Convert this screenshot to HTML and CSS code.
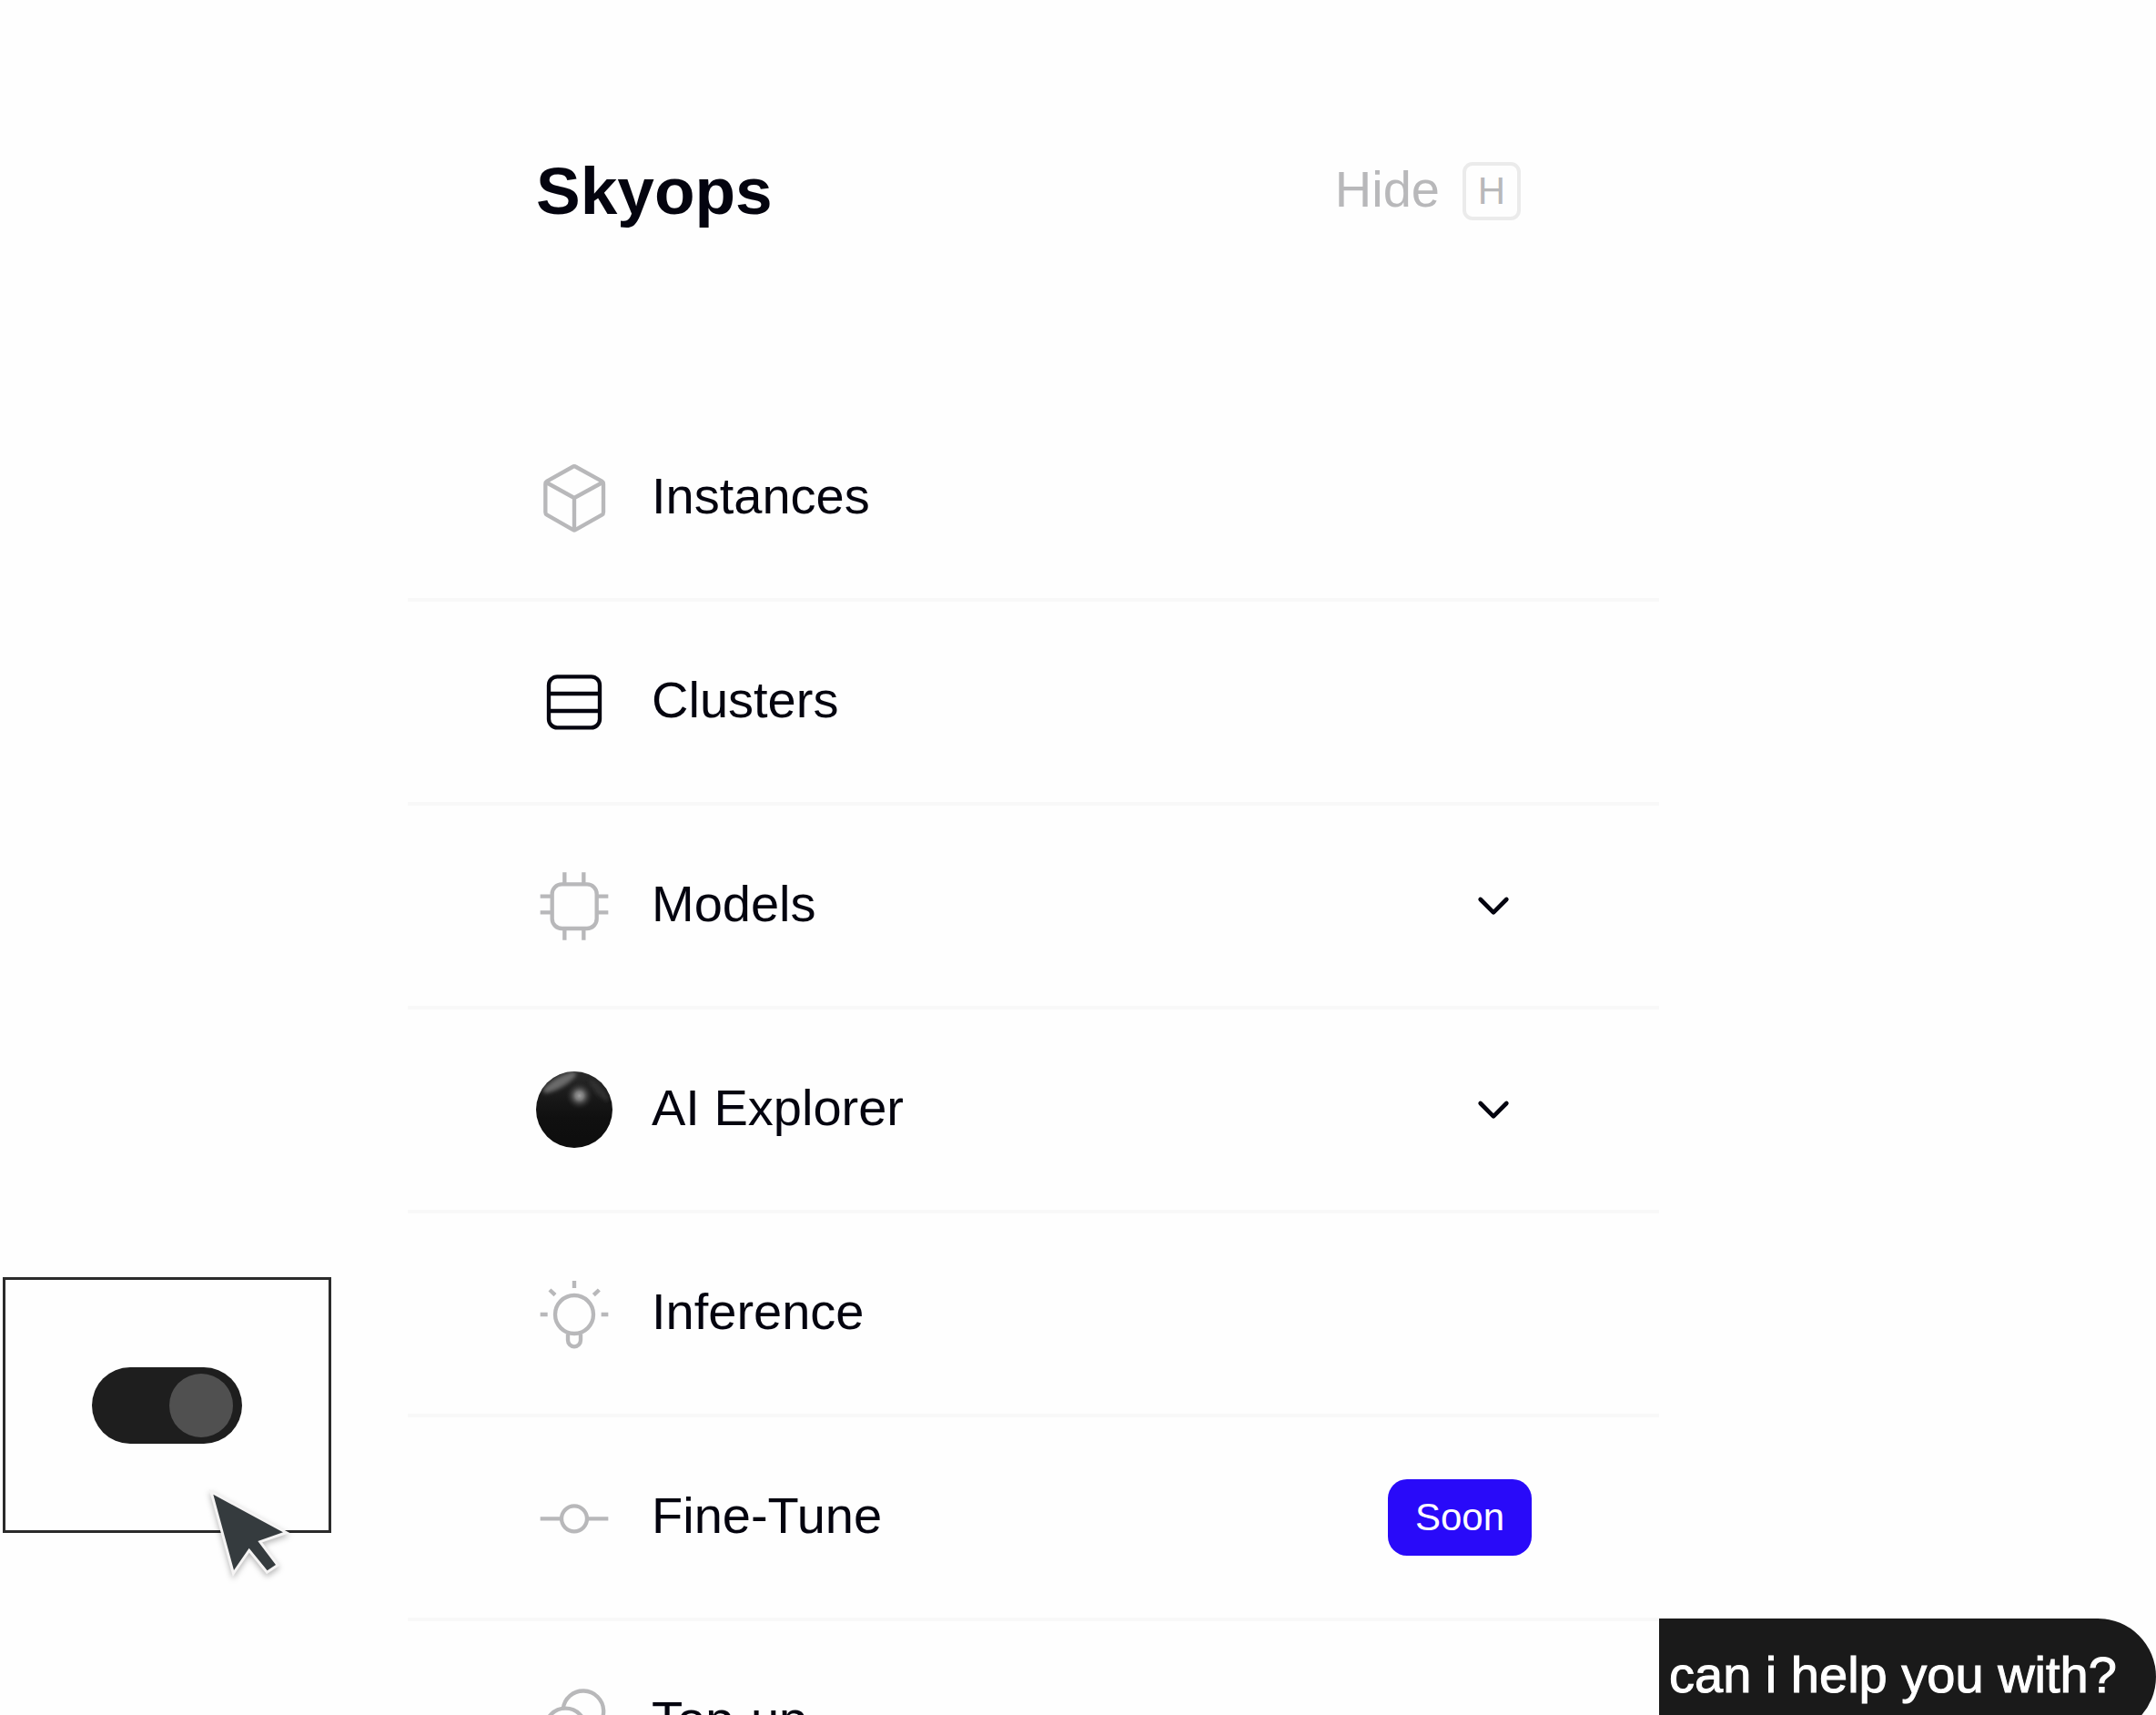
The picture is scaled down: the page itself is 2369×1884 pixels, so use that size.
FILE: index.html
```html
<!DOCTYPE html>
<html lang="en">
<head>
<meta charset="utf-8">
<title>Skyops</title>
<link rel="stylesheet" href="styles.css">
</head>
<body>
<div class="stage">
  <aside class="side side-left">
    <div class="switch-card">
      <input class="switch" type="checkbox" role="switch" aria-label="Show sidebar" checked>
      <svg class="cursor" viewBox="0 0 330 330" aria-hidden="true">
        <path d="M43 35 273 160 190 189 249 267 221 286 161 212 111 285Z"/>
      </svg>
    </div>
  </aside>

  <main class="panel">
    <header class="panel-head">
      <h1 class="brand">Skyops</h1>
      <button class="hide" type="button"><span class="hide-label">Hide</span><kbd class="key">H</kbd></button>
    </header>
    <nav>
      <ul class="menu">
        <li class="item">
          <a class="row" href="#instances">
            <svg class="icon" viewBox="0 0 252 252" aria-hidden="true">
              <path d="M120 24Q126 19 132 24L217 71Q222 74 222 80V173Q222 179 217 182L132 230Q126 235 120 230L36 182Q31 179 31 173V80Q31 74 36 71ZM34 75 126 126 219 75M126 126V232"/>
            </svg>
            <span class="label">Instances</span>
          </a>
        </li>
        <li class="item">
          <a class="row" href="#clusters">
            <svg class="icon icon-active" viewBox="0 0 252 252" aria-hidden="true">
              <rect x="42" y="43" width="168" height="168" rx="28"/>
              <path d="M42 99H210M42 156H210"/>
            </svg>
            <span class="label">Clusters</span>
          </a>
        </li>
        <li class="item">
          <button class="row" type="button" aria-expanded="false">
            <svg class="icon" viewBox="0 0 252 252" aria-hidden="true">
              <rect x="53" y="55" width="147" height="146" rx="32"/>
              <path d="M94 16V55M157 16V55M94 201V239M157 201V239M14 95H53M14 148H53M200 95H238M200 148H238"/>
            </svg>
            <span class="label">Models</span>
            <svg class="icon chevron" viewBox="0 0 252 252" aria-hidden="true"><path d="M83 105 126 148 169 105"/></svg>
          </button>
        </li>
        <li class="item">
          <button class="row" type="button" aria-expanded="false">
            <svg class="orb" viewBox="0 0 252 252" aria-hidden="true">
              <defs>
                <linearGradient id="orb-base" x1="0" y1="0" x2="0" y2="1">
                  <stop offset="0" stop-color="#2a2a2a"/>
                  <stop offset=".35" stop-color="#181818"/>
                  <stop offset=".6" stop-color="#101010"/>
                  <stop offset="1" stop-color="#0d0d0d"/>
                </linearGradient>
                <radialGradient id="orb-shine">
                  <stop offset="0" stop-color="#a0a0a0"/>
                  <stop offset=".3" stop-color="#8a8a8a" stop-opacity=".85"/>
                  <stop offset=".65" stop-color="#555" stop-opacity=".4"/>
                  <stop offset="1" stop-color="#222" stop-opacity="0"/>
                </radialGradient>
                <filter id="orb-soft" x="-50%" y="-100%" width="200%" height="300%"><feGaussianBlur stdDeviation="6"/></filter>
                <clipPath id="orb-clip"><circle cx="126" cy="126" r="126"/></clipPath>
              </defs>
              <g clip-path="url(#orb-clip)">
                <rect width="252" height="252" fill="url(#orb-base)"/>
                <ellipse cx="78" cy="36" rx="62" ry="17" fill="#6a6a6a" transform="rotate(-30 78 36)" filter="url(#orb-soft)"/>
                <ellipse cx="208" cy="62" rx="46" ry="12" fill="#303030" transform="rotate(48 208 62)" filter="url(#orb-soft)"/>
                <circle cx="143" cy="80" r="46" fill="url(#orb-shine)"/>
              </g>
            </svg>
            <span class="label">AI Explorer</span>
            <svg class="icon chevron" viewBox="0 0 252 252" aria-hidden="true"><path d="M83 105 126 148 169 105"/></svg>
          </button>
        </li>
        <li class="item">
          <a class="row" href="#inference">
            <svg class="icon" viewBox="0 0 252 252" aria-hidden="true">
              <circle cx="126" cy="129" r="63"/>
              <path d="M126 18V42M14 129H38M215 129H238M45 48 63 65M208 48 190 65M105 194V214A21 21 0 0 0 147 214V194"/>
            </svg>
            <span class="label">Inference</span>
          </a>
        </li>
        <li class="item">
          <a class="row" href="#fine-tune">
            <svg class="icon" viewBox="0 0 252 252" aria-hidden="true">
              <circle cx="126" cy="130" r="42"/>
              <path d="M14 130H84M168 130H238"/>
            </svg>
            <span class="label">Fine-Tune</span>
            <span class="badge">Soon</span>
          </a>
        </li>
        <li class="item">
          <a class="row" href="#top-up">
            <svg class="icon" viewBox="0 0 252 252" aria-hidden="true">
              <circle cx="97" cy="150" r="67"/>
              <path d="M89 85A67 67 0 1 1 164 159"/>
            </svg>
            <span class="label">Top-up</span>
          </a>
        </li>
      </ul>
    </nav>
  </main>

  <aside class="side">
    <p class="bubble">can i help you with?</p>
  </aside>
</div>
</body>
</html>
```
FILE: styles.css
```css
* {
  box-sizing: border-box;
}

body {
  margin: 0;
  background: #fefefe;
  color: #04040f;
  font-family: "Liberation Sans", Arial, sans-serif;
  font-size: 56px;
  line-height: 64px;
}

.stage {
  display: grid;
  grid-template-columns: 448px minmax(0, 1fr) 546px;
  grid-template-rows: minmax(0, 1fr);
  height: 100vh;
  overflow: hidden;
}

.side {
  display: flex;
  flex-direction: column;
  justify-content: flex-end;
}

/* Switch preview */
.side-left {
  padding: 0 84px 200px 3px;
}

.switch-card {
  position: relative;
  display: flex;
  align-items: center;
  justify-content: center;
  height: 281px;
  border: 3px solid #2b2b2b;
}

.switch {
  appearance: none;
  display: flex;
  align-items: center;
  justify-content: flex-end;
  width: 165px;
  height: 84px;
  margin: 0;
  padding: 0 10px;
  border-radius: 42px;
  background: #1e1e1e;
}

.switch::before {
  content: "";
  width: 70px;
  height: 70px;
  border-radius: 50%;
  background: #505050;
}

.switch:not(:checked) {
  justify-content: flex-start;
}

.cursor {
  position: absolute;
  top: 224px;
  left: 214px;
  width: 110px;
  height: 110px;
  overflow: visible;
  fill: #353b3e;
  stroke: #f5f4f4;
  stroke-width: 18;
  paint-order: stroke;
  filter: drop-shadow(0 3px 3px rgba(0, 0, 0, 0.28));
}

/* Sidebar panel */
.panel {
  min-width: 0;
}

.panel-head {
  display: flex;
  align-items: flex-start;
  justify-content: space-between;
  height: 437px;
  padding: 169px 152px 0 141px;
}

.brand {
  margin: 0;
  font-size: 73px;
  line-height: 82px;
}

.hide {
  display: flex;
  align-items: center;
  gap: 25px;
  height: 82px;
  padding: 0;
  border: 0;
  background: none;
  color: #b8b8ba;
  font: inherit;
}

.hide-label {
  padding-bottom: 4px;
}

.key {
  display: flex;
  align-items: center;
  justify-content: center;
  width: 64px;
  height: 64px;
  border: 4px solid #ebebeb;
  border-radius: 11px;
  font-family: inherit;
  font-size: 42px;
}

.menu {
  margin: 0;
  padding: 0;
  list-style: none;
}

.item {
  border-bottom: 4px solid #f8f8f8;
}

.row {
  display: flex;
  align-items: center;
  gap: 43px;
  width: 100%;
  height: 220px;
  padding: 0 140px 0 141px;
  border: 0;
  background: none;
  color: inherit;
  font: inherit;
  text-align: left;
  text-decoration: none;
}

.label {
  flex: 1;
  padding-bottom: 4px;
}

.icon {
  flex: none;
  width: 84px;
  height: 84px;
  fill: none;
  stroke: #b8b8ba;
  stroke-width: 13;
  stroke-linejoin: round;
}

.icon-active {
  stroke: #04040f;
}

.chevron {
  stroke: #04040f;
  stroke-width: 14;
  stroke-linecap: round;
}

.orb {
  flex: none;
  width: 84px;
  height: 84px;
}

.badge {
  display: flex;
  align-items: center;
  justify-content: center;
  width: 158px;
  height: 84px;
  border-radius: 21px;
  background: #290af9;
  color: #fff;
  font-size: 42px;
}

/* Assistant prompt */
.bubble {
  flex: none;
  height: 128px;
  margin: 0 0 -22px;
  padding: 30px 11px;
  border-radius: 0 64px 64px 0;
  background: #1a1a1a;
  color: #fff;
  white-space: nowrap;
  -webkit-text-stroke: 1px #fff;
}
```
